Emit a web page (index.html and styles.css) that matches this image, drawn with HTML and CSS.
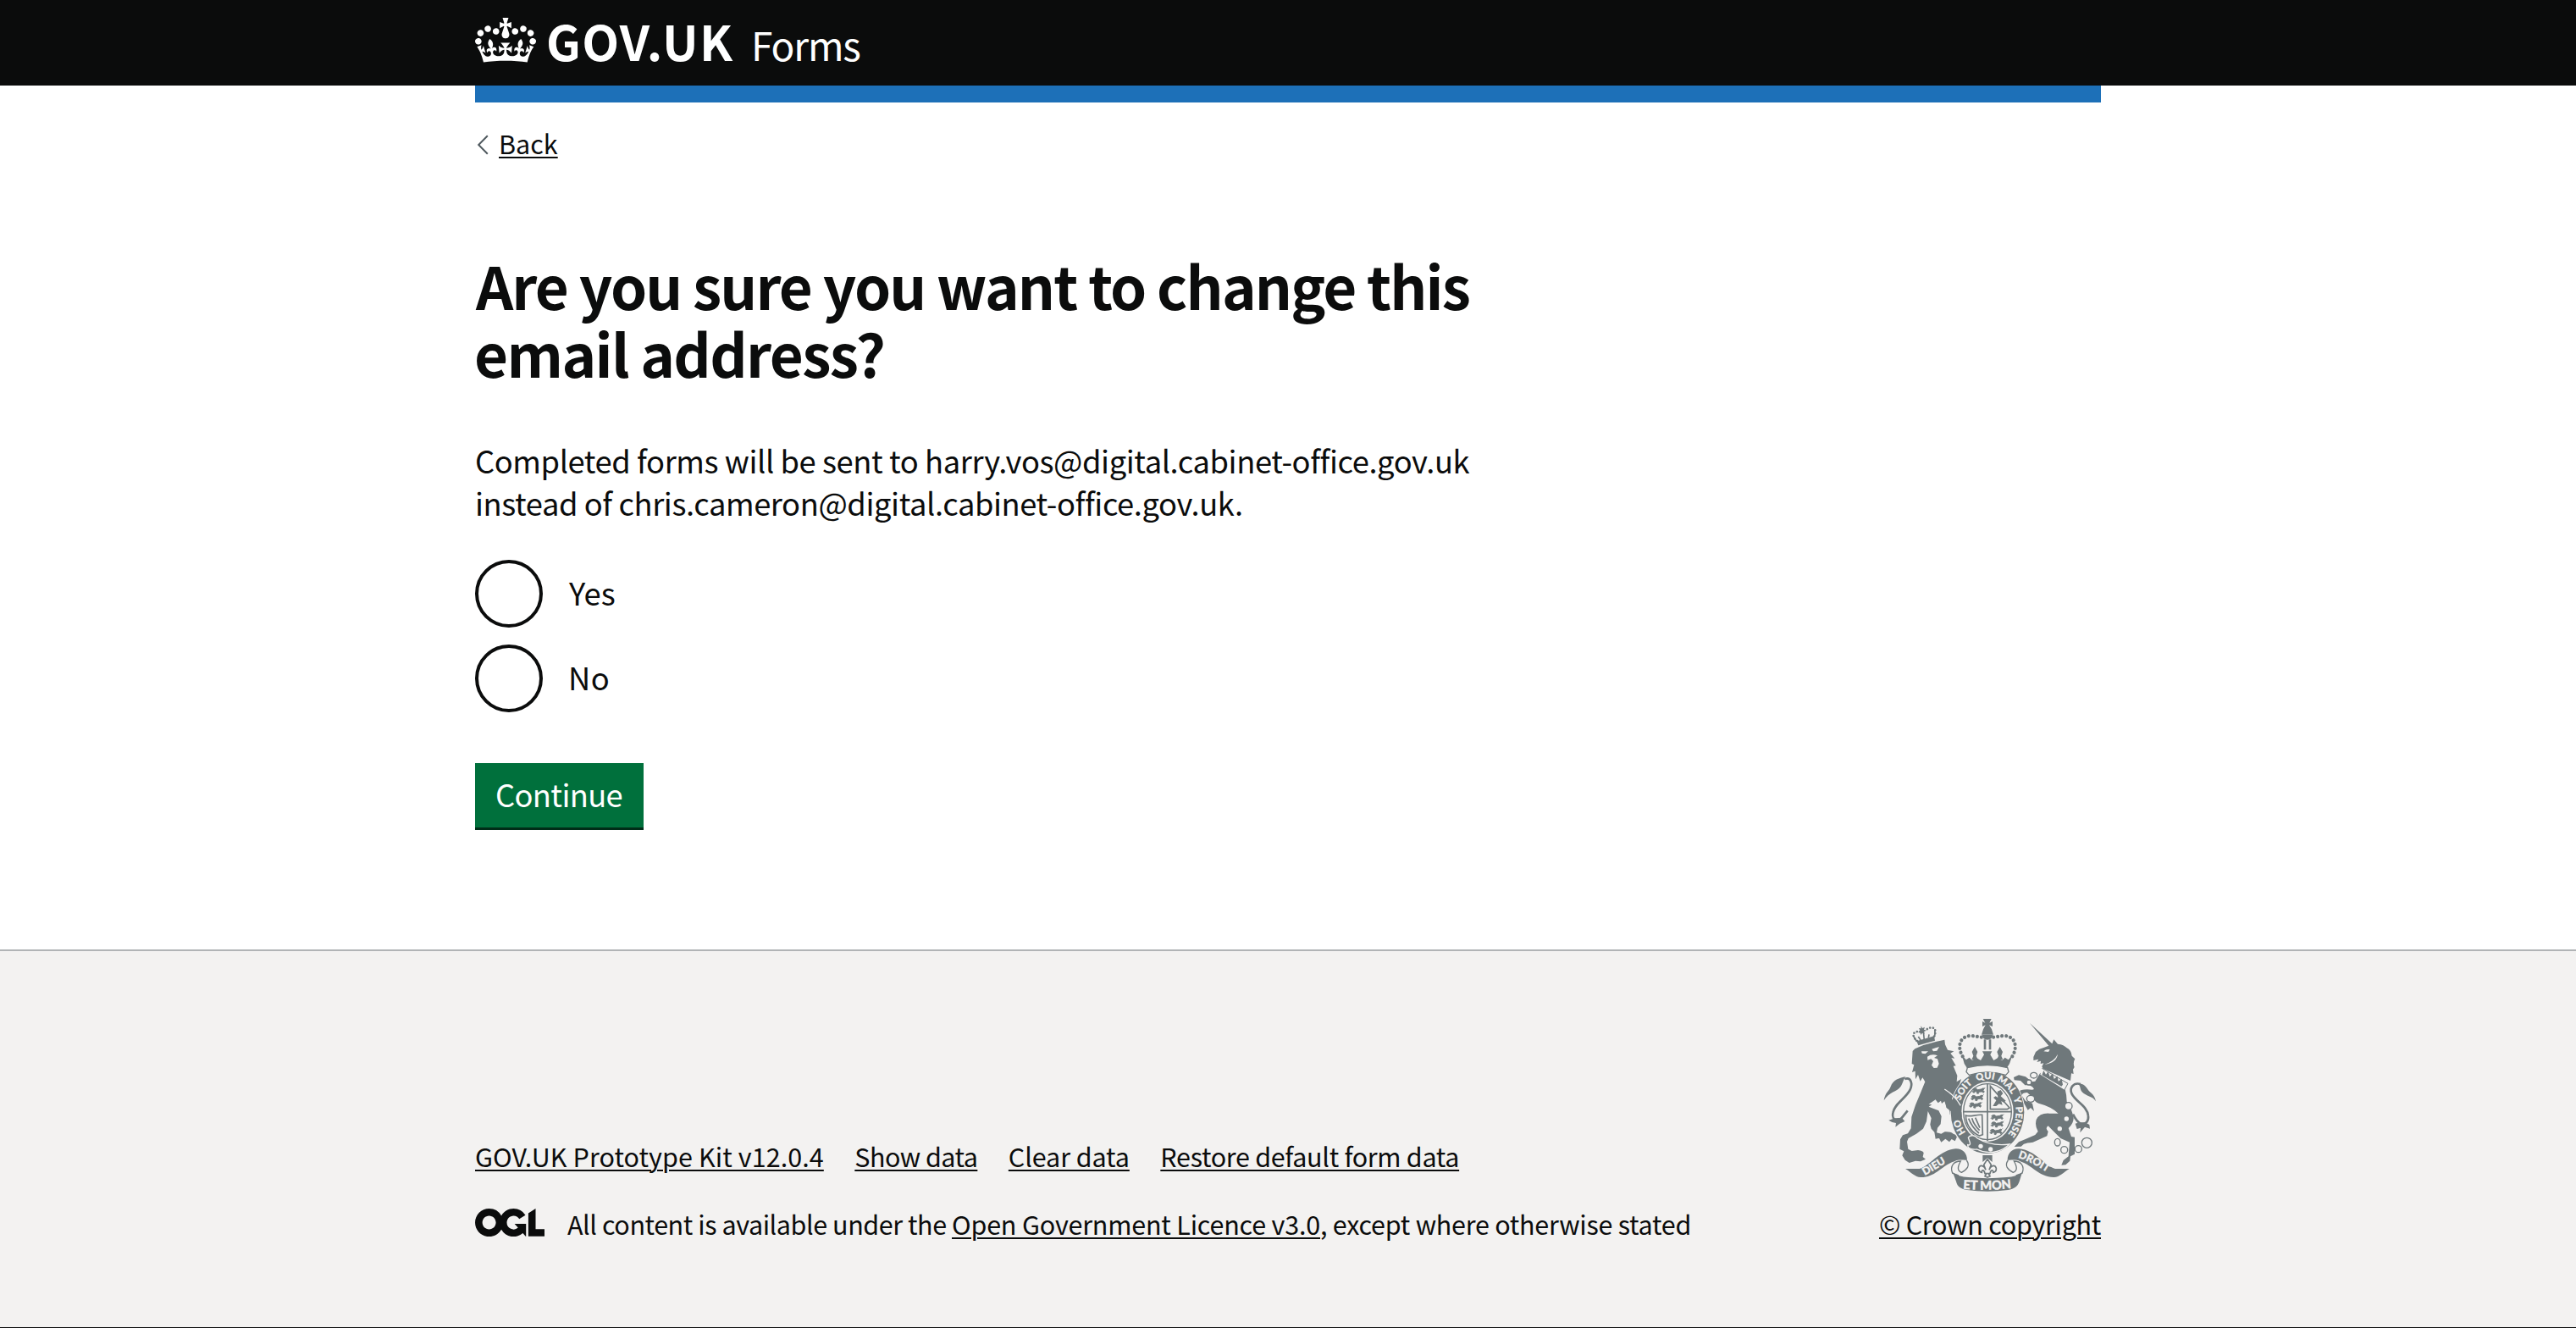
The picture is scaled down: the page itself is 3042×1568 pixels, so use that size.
FILE: index.html
```html
<!DOCTYPE html>
<html lang="en">
<head>
<meta charset="utf-8">
<title>Are you sure you want to change this email address? – GOV.UK Forms</title>
<link rel="stylesheet" href="styles.css">
</head>
<body>
<header class="header">
  <div class="container header-row">
    <svg class="crown" viewBox="0 0 132 97" aria-hidden="true"><path fill="currentColor" fill-rule="evenodd" d="M25 30.2c3.5 1.5 7.7-.2 9.1-3.7 1.5-3.6-.2-7.8-3.9-9.2-3.6-1.4-7.6.3-9.1 3.9-1.4 3.5.3 7.5 3.9 9zM9 39.5c3.6 1.5 7.8-.2 9.2-3.7 1.5-3.6-.2-7.8-3.9-9.1-3.6-1.5-7.6.2-9.1 3.8-1.4 3.5.3 7.5 3.8 9zM4.4 57.2c3.5 1.5 7.7-.2 9.1-3.8 1.5-3.6-.2-7.7-3.9-9.1-3.5-1.5-7.6.3-9.1 3.8-1.4 3.5.3 7.6 3.9 9.1zm38.3-21.4c3.5 1.5 7.7-.2 9.1-3.8 1.5-3.6-.2-7.7-3.9-9.1-3.6-1.5-7.6.3-9.1 3.8-1.3 3.6.4 7.7 3.9 9.1zm64.4-5.6c-3.6 1.5-7.8-.2-9.1-3.7-1.5-3.6.2-7.8 3.8-9.2 3.6-1.4 7.7.3 9.2 3.9 1.3 3.5-.4 7.5-3.9 9zm15.9 9.3c-3.6 1.5-7.7-.2-9.1-3.7-1.5-3.6.2-7.8 3.7-9.1 3.6-1.5 7.7.2 9.2 3.8 1.5 3.5-.3 7.5-3.8 9zm4.7 17.7c-3.6 1.5-7.8-.2-9.2-3.8-1.5-3.6.2-7.7 3.9-9.1 3.6-1.5 7.7.3 9.2 3.8 1.3 3.5-.4 7.6-3.9 9.1zM89.3 35.8c-3.6 1.5-7.8-.2-9.2-3.8-1.4-3.6.2-7.7 3.9-9.1 3.6-1.5 7.7.3 9.2 3.8 1.4 3.6-.3 7.7-3.9 9.1zM69.7 17.7l8.9 4.7V9.3l-8.9 2.8c-.2-.3-.5-.6-.9-.9L72.4 0H59.6l3.5 11.2c-.3.3-.6.5-.9.9l-8.8-2.8v13.1l8.8-4.7c.3.3.6.7.9.9l-5 15.4v.1c-.2.8-.4 1.6-.4 2.4 0 4.1 3.1 7.5 7 8.1h.2c.3 0 .7.1 1 .1.4 0 .7 0 1-.1h.2c4-.6 7.1-4.1 7.1-8.1 0-.8-.1-1.7-.4-2.4V34l-5.1-15.4c.4-.2.7-.6 1-.9zM66 92.8c16.9 0 32.8 1.1 47.1 3.2 4-16.9 8.9-26.7 14-33.5l-9.6-3.4c1 4.9 1.1 7.2 0 10.2-1.5-1.4-3-4.3-4.2-8.7L108.6 76c2.8-2 5-3.2 7.5-3.3-4.4 9.4-10 11.9-13.6 11.2-4.3-.8-6.3-4.6-5.6-7.9 1-4.7 5.7-5.9 8-.5 4.3-8.7-3-11.4-7.6-8.8 7.1-7.2 7.9-13.5 2.1-21.1-8 6.1-8.1 12.3-4.5 20.8-4.7-5.4-12.1-2.5-9.5 6.2 3.4-5.2 7.9-2 7.2 3.1-.6 4.3-6.4 7.8-13.5 7.2-10.3-.9-10.9-8-11.2-13.8 2.5-.5 7.1 1.8 11 7.3L80.2 60c-4.1 4.4-8 5.3-12.3 5.4 1.4-4.4 8-11.6 8-11.6H55.5s6.4 7.2 7.9 11.6c-4.2-.1-8-1-12.3-5.4l1.4 16.4c3.9-5.5 8.5-7.7 10.9-7.3-.3 5.8-.9 12.8-11.1 13.8-7.2.6-12.9-2.9-13.5-7.2-.7-5 3.8-8.3 7.1-3.1 2.7-8.7-4.6-11.6-9.4-6.2 3.7-8.5 3.6-14.7-4.6-20.8-5.8 7.6-5 13.9 2.2 21.1-4.7-2.6-11.9.1-7.7 8.8 2.3-5.5 7.1-4.2 8.1.5.7 3.3-1.3 7.1-5.7 7.9-3.5.7-9-1.8-13.5-11.2 2.5.1 4.7 1.3 7.5 3.3l-4.7-15.4c-1.2 4.4-2.7 7.2-4.3 8.7-1.1-3-.9-5.3 0-10.2l-9.5 3.4c5 6.9 9.9 16.7 14 33.5 14.8-2.1 30.8-3.2 47.7-3.2z"/></svg>
    <span class="wordmark">GOV.UK</span>
    <span class="product">Forms</span>
  </div>
</header>
<div class="container">
  <div class="bar"></div>
  <a class="back" href="#"><svg class="chevron" viewBox="0 0 14 24" aria-hidden="true"><path d="M12.8 1.2 2.2 12l10.6 10.8" fill="none" stroke="#505a5f" stroke-width="2"/></svg><span class="link back-text">Back</span></a>
  <main class="main">
    <h1 class="heading"><span class="heading-a">Are you sure you want to change this</span><br><span class="heading-b">email address?</span></h1>
    <p class="body">Completed forms will be sent to harry.vos@digital.cabinet-office.gov.uk<br>instead of chris.cameron@digital.cabinet-office.gov.uk.</p>
    <div class="radios">
      <label class="radio"><span class="dot"></span><span class="label label-yes">Yes</span></label>
      <label class="radio"><span class="dot"></span><span class="label label-no">No</span></label>
    </div>
    <button class="button" type="button">Continue</button>
  </main>
</div>
<footer class="footer">
  <div class="container footer-row">
    <div class="meta">
      <nav class="links">
        <a class="link l1" href="#">GOV.UK Prototype Kit v12.0.4</a>
        <a class="link l2" href="#">Show data</a>
        <a class="link l3" href="#">Clear data</a>
        <a class="link l4" href="#">Restore default form data</a>
      </nav>
      <div class="licence">
        <svg class="ogl" viewBox="0 0 483.2 195.7" aria-hidden="true"><path fill="currentColor" d="M421.5 142.8V.1l-50.7 32.3v161.1h112.4v-50.7zm-122.3-9.6A47.12 47.12 0 0 1 221 97.8c0-26 21.1-47.1 47.1-47.1 16.7 0 31.4 8.7 39.7 21.8l42.7-27.2A97.63 97.63 0 0 0 268.1 0c-36.5 0-68.3 20.1-85.1 49.7A98 98 0 0 0 97.8 0C43.9 0 0 43.9 0 97.8s43.9 97.8 97.8 97.8c36.5 0 68.3-20.1 85.1-49.7a97.76 97.76 0 0 0 149.6 25.4l19.4 22.2h3v-87.8h-80l24.3 27.5zM97.8 145c-26 0-47.1-21.1-47.1-47.1s21.1-47.1 47.1-47.1 47.1 21.1 47.1 47.1S123.8 145 97.8 145"/></svg>
        <span class="licence-text"><span class="t1">All content is available under the </span><a class="link t2" href="#">Open Government Licence v3.0</a><span class="t3">, except where otherwise stated</span></span>
      </div>
    </div>
    <div class="copyright">
      <svg class="crest" viewBox="75 69 750 612" aria-hidden="true">
        <defs>
          <path id="motto" d="M441 512A101 115 0 0 1 441 282A101 115 0 0 1 441 512"/>
          <path id="dieu" d="M219 624Q262 600 322 562"/>
          <path id="mon" d="M354 671Q441 679 530 668"/>
          <path id="droit" d="M549 561Q598 574 672 626"/>
          <g id="beast"><path d="M0 6l5-5 8 1 4 4 12-2 9-4 3 3-5 5 5 4-3 5-6-4-10 1-2 6-6-1 1-6-6-1-4 5-5-2 4-6zM-3 13l4-2M40 2l4-4" stroke="#6f787b" stroke-width="2.5"/></g>
        </defs>
        <g class="ink">
          <!-- lion -->
          <path d="M176 183l8-8 30-13 47-13 28-6 2 17 9 19 22 5-12 7 15 18-12-2 16 28-9 1 14 34-2 22 16-10-12 38 8 50 8 38-5 20-9 0-3-18-8 18-11-8 1-21-9 10-3-20-9-6-7-22-10 8-3-10-10 8-9-12-24 16 11 2-11 7 17 7 18 7 10 20-3 28-11 13-3 17 16 4 13-7q20-1 30 7 15 4 12 13l-6 13-12-7-8 10-14-11-15 12-7-14-13 2-4-24-11-12-4-15 4-22-12-25-5 36-12 26-24 18-28 16-5 12 4 26 13 7 22-3q18 2 20 10l-3 14 10 8-18 8-18-2-22 7-15-10-10-16 6-15-15-8 2-34 9-15 18-6 11-18 2-41 14-42 20-48 14-34-9-15-8 13-8-23-9 16-1-29-11 4 7-26-8-4z"/>
          <path d="M74 358c4-28 18-32 24-49 8-24 32-31 53-35-8 9-8 20-17 34-14 20-41 18-60 50z"/>
          <path d="M148 282c22-8 29 17 19 38-16 32-55 48-61 82-3 14 3 24 12 26 16 2 24-15 40-34" fill="none" stroke="#6f787b" stroke-width="8"/>
          <path d="M91 428l22-7 25-2 10 13-18 8-15 12 2-14-14-3z"/>
          <path d="M190 148l62-18 3 16-59 17zM205 94l6 8 8-4-3 9 9 3-9 4 2 8-8-3-5 7-2-9-8-1 7-6-4-8 8 1z"/>
          <path d="M190 149l-11-19M254 132l1-22M214 114l3 30M196 132l9 14M234 124l-2 12" stroke="#6f787b" stroke-width="5" fill="none"/>
          <path d="M192 147c-27-22-8-39 12-31M252 131c14-30-8-38-26-25" fill="none" stroke="#6f787b" stroke-width="8" stroke-linecap="round" stroke-dasharray=".1 11"/>
          <!-- unicorn -->
          <path d="M591 84L670 157L676 142L690 158Q712 160 722 172Q738 180 740 200L751 211Q743 225 749 240L744 248 746 264 738 262L735 288L638 246L634 238L640 226L629 228L630 218L616 222L622 212 604 216L604 204L612 186Q624 174 640 171L658 164Z"/>
          <path d="M628 260L716 318Q722 340 722 362Q742 392 746 420Q746 440 728 456L738 486L750 488L750 548L735 556L733 572L718 586L703 587L710 570L728 556L732 506L700 492L672 464L656 448Q644 456 656 468L652 484L602 506Q580 508 570 512L560 521L536 522L552 505L574 496L610 480L620 468Q608 448 614 426Q626 402 660 404L692 404Q668 380 622 368Q608 362 604 350L582 330Q566 330 562 340L576 360L600 368L606 396L594 384L584 392L574 374L558 350L550 328Q560 316 600 320L606 318Q600 302 574 304L558 288L536 286L534 276L552 268L576 274L598 292L610 290Z"/>
          <path d="M825 361c-6-29-24-31-29-43-10-16-20-20-38-21 16 9 8 18 18 31 15 16 37 14 49 33z"/>
          <path d="M771 300c-26-7-41 14-31 35 14 28 55 42 58 78 2 18-8 30-24 28-13-3-22-18-30-34" fill="none" stroke="#6f787b" stroke-width="8"/>
          <path d="M752 440l14-4 22 0 14 8 2 14-18-6-17 20 2-17-13 4z"/>
          <!-- royal crown -->
          <path d="M425 69h30l-7 14 11-5v18l-12-5 9 15 6 19h-42l6-19 8-15-11 5v-18l10 5zM422 126h38c-2 13-8 15-19 17-11-2-17-4-19-17zM350 196l15 18 12-8 10 10 16-8 14 8 12-20-6-12h34l-6 12 12 20 14-8 16 8 10-10 12 8 15-18-11 32-10 16q-70-22-140 0l-10-16z"/>
          <path d="M428 142h8v36h-8zM446 142h8v36h-8zM396 168l10 18-5 14 6 14h-22l6-14-5-14zM485 168l10 18-5 14 6 14h-22l6-14-5-14z"/>
          <path d="M353 202c-17-28-16-68 25-73 20 0 32 5 45 5M529 202c17-28 16-68-25-73-20 0-32 5-45 5" fill="none" stroke="#6f787b" stroke-width="12.5" stroke-linecap="round" stroke-dasharray=".1 15"/>
          <!-- garter -->
          <ellipse cx="441" cy="400" rx="133" ry="150" fill="#f3f2f1"/>
          <path fill-rule="evenodd" d="M441 252a130 147 0 1 1 0 294a130 147 0 1 1 0-294zm0 40a92 106 0 1 0 0 212a92 106 0 1 0 0-212z"/>
          <path d="M370 242q71-19 142 0l4 15-10 11q-65-21-130 0l-10-11z" fill="#f3f2f1" stroke="#6f787b" stroke-width="4"/>
          <ellipse cx="441" cy="398" rx="85" ry="99" fill="#f3f2f1" stroke="#6f787b" stroke-width="4"/>
          <path d="M441 298v204M355 398h172" stroke="#6f787b" stroke-width="5"/>
          <path d="M451 307l68 77-8 5h-60z" fill="none" stroke="#6f787b" stroke-width="5"/>
          <path d="M460 378l12-20-10-10 8-5 8 5-2-22 12-5 8 12-8 10 18 16-8 6-8-5 4 14-12-4-10 8z"/>
          <use href="#beast" x="389" y="314"/><use href="#beast" x="384" y="339"/><use href="#beast" x="378" y="365"/>
          <use href="#beast" x="455" y="408"/><use href="#beast" x="455" y="433"/><use href="#beast" x="451" y="459"/>
          <path d="M364 411c14 7 37-4 58-2l2 70-12 4c-22-9-47-34-48-72zM374 422c10 25 19 37 37 52M386 421c6 22 14 31 27 43M398 419l16 36" fill="none" stroke="#6f787b" stroke-width="5"/>
          <path d="M373 490c7-12 26-9 32 2 36 22 72 26 114 21-22 22-67 42-115 18-16 2-34-2-33-16 7 3 10-2 8-8z" stroke="#f3f2f1" stroke-width="4"/>
          <!-- lion paw over the garter -->
          <path d="M284 322L334 372L349 400L350 418L338 408L332 426L322 416L316 400L296 384Z"/>
          <!-- fleur-de-lis -->
          <path d="M424 552h34v24l-17-14-17 14z"/>
          <path d="M441 566l13 20-7 18c5-16 20-20 25-6 1 9-5 14-11 15 1-11-9-10-11 4h-6l6 9-9 4-9-4 6-9h-6c-2-14-12-15-11-4-6-1-12-6-11-15 5-14 20-10 25 6l-7-18z" fill="#f3f2f1" stroke="#6f787b" stroke-width="5"/>
          <!-- ribbon -->
          <path d="M150 600h50c32-7 72-67 128-71 25-1 41 16 41 40-15 1-31-3-45 5-42 13-68 56-118 56-21 1-35-18-56-30z"/>
          <path d="M731 600h-50c-32-7-72-67-128-71-25-1-41 16-41 40 15 1 31-3 45 5 42 13 68 56 118 56 21 1 35-18 56-30z"/>
          <path d="M367 570c14 20 1 33-18 43-16-6-14-20-3-40-24 0-39 16-29 43l22 8M514 570c-14 20-1 33 18 43 16-6 14-20 3-40 24 0 39 16 29 43l-22 8" fill="none" stroke="#6f787b" stroke-width="4"/>
          <path d="M318 612q20 17 55 18 68 7 136 0 35-1 55-18l-10 33c-6 18-18 26-40 30q-73 11-146 0c-22-4-34-12-38-30z"/>
        </g>
        <g class="paper">
          <path d="M207 184l24 0-10 9-12-2zM244 176l26-8-8 14-13 2zM228 203q16-12 36-4l-12 8 12 4 5 17-6 14-12 1-8-10 6-14-8-8-12 4zM640 184q10-9 22-6l-5 8zM690 194q-4 30-46 36 34-11 46-36zM634 244l92 54-12 22-86-54z"/>
          <path d="M289 318q36 22 57 58" fill="none" stroke="#f3f2f1" stroke-width="4"/>
          <circle cx="721" cy="423" r="8"/><circle cx="697" cy="458" r="8"/><circle cx="417" cy="520" r="8"/><circle cx="452" cy="531" r="8"/>
        </g>
        <path d="M634 268l6-16 8 14 8-10 6 18 10-12 5 20 12-10 3 18 12-8 4 20-5 6z" fill="#6f787b"/>
        <path d="M634 244l92 54-12 22" fill="none" stroke="#6f787b" stroke-width="3"/>
        <g class="ring">
          <ellipse cx="605" cy="269" rx="12" ry="10"/><ellipse cx="588" cy="294" rx="9" ry="9"/><ellipse cx="594" cy="352" rx="14" ry="12"/><circle cx="728" cy="378" r="13"/><ellipse cx="689" cy="506" rx="10" ry="13"/><circle cx="713" cy="533" r="12"/><circle cx="763" cy="530" r="12"/><circle cx="793" cy="508" r="18"/>
        </g>
        <g class="motto">
          <text><textPath href="#motto" startOffset="90">HO</textPath></text>
          <text><textPath href="#motto" startOffset="208">SOIT</textPath></text>
          <text><textPath href="#motto" startOffset="301">QUI</textPath></text>
          <text><textPath href="#motto" startOffset="374">MAL</textPath></text>
          <text><textPath href="#motto" startOffset="460">Y</textPath></text>
          <text><textPath href="#motto" startOffset="493">PENSE</textPath></text>
        </g>
        <g class="scroll">
          <text><textPath href="#dieu">DIEU</textPath></text>
          <text class="mon"><textPath href="#mon">ET MON</textPath></text>
          <text><textPath href="#droit">DROIT</textPath></text>
        </g>
      </svg>
      <a class="link crown-link" href="#">© Crown copyright</a>
    </div>
  </div>
</footer>
</body>
</html>
```
FILE: styles.css
```css
* { box-sizing: border-box; }
body {
  margin: 0;
  background: #fff;
  color: #0b0c0c;
  font-family: "Noto Sans CJK SC", "Noto Sans", sans-serif;
  font-size: 36.3px;
  line-height: 50px;
}
.container { width: 1920px; margin: 0 auto; }
.link { color: inherit; text-decoration: underline; text-decoration-thickness: 2px; text-underline-offset: 3px; }

.header { height: 101px; background: #0b0c0c; color: #fff; }
.header-row { display: flex; align-items: baseline; padding-top: 17px; }
.crown { width: 72px; height: 53px; align-self: flex-start; margin-top: 4px; flex: none; }
.wordmark { width: 242px; margin-left: 12px; font-size: 57px; line-height: 60px; font-weight: 700; letter-spacing: 1.37px; white-space: nowrap; }
.product { font-size: 46px; line-height: 60px; letter-spacing: -1.18px; }

.bar { height: 20px; background: #1d70b8; }
.back { display: flex; align-items: center; margin-top: 28px; height: 40px; color: #0b0c0c; font-size: 30.5px; line-height: 40px; text-decoration: none; }
.chevron { width: 14px; height: 24px; margin: 3px 12px 0 2px; }
.back-text { letter-spacing: .02px; }

.main { height: 932px; padding-top: 107px; }
.heading { margin: 0 0 62px; font-size: 69px; line-height: 80px; font-weight: 700; white-space: nowrap; }
.heading-a { letter-spacing: -1.88px; margin-left: 1px; }
.heading-b { letter-spacing: -1.6px; margin-left: -1px; }
.body { margin: 0 0 43px; letter-spacing: -.41px; white-space: nowrap; }
.radios { display: flex; flex-direction: column; gap: 20px; margin-bottom: 60px; }
.radio { display: flex; align-items: center; gap: 30px; height: 80px; }
.dot { width: 80px; height: 80px; border: 4px solid #0b0c0c; border-radius: 50%; }
.label { padding-bottom: 4px; }
.label-yes { margin-left: 1px; }
.label-no { letter-spacing: .6px; }
.button { display: block; width: 199px; height: 76px; padding: 0 0 5px 24px; border: 0; box-shadow: 0 3px 0 #002d18; background: #00703c; color: #fff; font: inherit; letter-spacing: -.65px; text-align: left; }

.footer { height: 447px; padding-top: 80px; border-top: 2px solid #b1b4b6; border-bottom: 1px solid #0b0c0c; background: #f3f2f1; font-size: 30.5px; line-height: 40px; white-space: nowrap; }
.footer-row { display: flex; justify-content: space-between; align-items: flex-end; }
.meta { display: flex; flex-direction: column; gap: 40px; }
.links { display: flex; gap: 36.5px; }
.licence { display: flex; gap: 27px; }
.ogl { width: 82px; height: 33.2px; margin-top: 2px; }
.l1 { letter-spacing: .078px; }
.l2 { letter-spacing: -.545px; }
.l3 { letter-spacing: -.093px; }
.l4 { letter-spacing: -.31px; }
.t1 { letter-spacing: -.438px; }
.t2 { letter-spacing: -.196px; }
.t3 { letter-spacing: -.26px; }
.crown-link { letter-spacing: -.285px; }
.copyright { display: flex; flex-direction: column; align-items: center; gap: 18px; }

.crest { width: 250px; height: 204px; overflow: visible; }
.ink { fill: #6f787b; }
.paper { fill: #f3f2f1; }
.ring { fill: #f3f2f1; stroke: #6f787b; stroke-width: 4; }
.motto, .scroll { fill: #f3f2f1; stroke: #f3f2f1; font-family: Lato, "Noto Sans", sans-serif; font-weight: 900; }
.motto { font-size: 33px; stroke-width: .8; }
.scroll { font-size: 37px; stroke-width: 1; }
.mon { font-size: 44px; }
```
